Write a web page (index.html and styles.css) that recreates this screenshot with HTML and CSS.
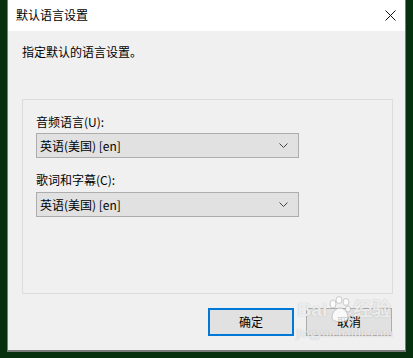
FILE: index.html
```html
<!DOCTYPE html>
<html lang="zh-CN">
<head>
<meta charset="utf-8">
<title>默认语言设置</title>
<link rel="stylesheet" href="styles.css">
</head>
<body>
<div class="dialog">
  <div class="titlebar">
    <span class="title">默认语言设置</span>
    <svg class="close" width="11" height="11" viewBox="0 0 11 11"><path d="M0.5 0.5 L10.5 10.5 M10.5 0.5 L0.5 10.5" stroke="#111" stroke-width="1" fill="none"/></svg>
  </div>
  <div class="body">
    <p class="intro">指定默认的语言设置。</p>
    <div class="group">
      <div class="label">音频语言(U):</div>
      <div class="combo"><span>英语(美国) [en]</span><svg class="chev" width="9" height="5" viewBox="0 0 9 5"><path d="M0.5 0.5 L4.5 4.5 L8.5 0.5" stroke="#444" stroke-width="1" fill="none"/></svg></div>
      <div class="label second">歌词和字幕(C):</div>
      <div class="combo"><span>英语(美国) [en]</span><svg class="chev" width="9" height="5" viewBox="0 0 9 5"><path d="M0.5 0.5 L4.5 4.5 L8.5 0.5" stroke="#444" stroke-width="1" fill="none"/></svg></div>
    </div>
    <div class="buttons">
      <div class="btn primary">确定</div>
      <div class="btn">取消</div>
    </div>
  </div>
  <div class="watermark">
    <span class="wm-logo">Bai<svg class="paw" width="24" height="28" viewBox="0 0 24 28"><g fill="rgba(255,255,255,0.8)" stroke="rgba(170,170,170,0.6)" stroke-width="1"><ellipse cx="5" cy="8" rx="3" ry="4"/><ellipse cx="11" cy="4" rx="3" ry="3.5"/><ellipse cx="18" cy="6" rx="3" ry="3.5"/><ellipse cx="20" cy="13" rx="2.5" ry="3"/><path d="M4 22 C4 15 9 12 12 12 C16 12 20 16 20 22 C20 27 4 27 4 22 Z"/></g></svg>经验</span>
    <span class="wm-url">jingyan.baidu.com</span>
  </div>
</div>
</body>
</html>
```
FILE: styles.css
```css
html, body {
  margin: 0;
  padding: 0;
}
body {
  width: 413px;
  height: 358px;
  background: #06300e;
  font-family: "Noto Sans CJK SC", "Noto Sans", sans-serif;
  font-size: 12px;
  color: #000;
  overflow: hidden;
}
.dialog {
  position: relative;
  margin-left: 7px;
  width: 397px;
  height: 350px;
  border-left: 1px solid #7b7b7b;
  border-right: 1px solid #7b7b7b;
  border-bottom: 2px solid #7b7b7b;
  background: #f0f0f0;
  display: flex;
  flex-direction: column;
}
.titlebar {
  height: 31px;
  background: #fff;
  display: flex;
  align-items: center;
  justify-content: space-between;
  padding: 0 9px 0 8px;
}
.title {
  line-height: 16px;
  margin-top: -1px;
}
.close {
  display: block;
  margin-top: -1px;
}
.body {
  flex: 1;
  display: flex;
  flex-direction: column;
  padding: 0 13px 0 14px;
}
.intro {
  margin: 13px 0 0 0;
  line-height: 16px;
}
.group {
  margin-top: 39px;
  border: 1px solid #dcdcdc;
  padding: 14px 0 0 13px;
  box-sizing: content-box;
  width: 356px;
  height: 179px;
}
.label {
  line-height: 16px;
  margin-bottom: 3px;
}
.label.second {
  margin-top: 14px;
  margin-bottom: 4px;
}
.combo {
  height: 23px;
  border: 1px solid #adadad;
  background: #e1e1e1;
  display: flex;
  align-items: center;
  justify-content: space-between;
  padding: 0 0 0 3px;
  box-sizing: content-box;
  width: 258px;
}
.combo span {
  line-height: 16px;
}
.chev {
  display: block;
  margin-right: 10px;
}
.buttons {
  margin-top: 14px;
  display: flex;
  justify-content: flex-end;
  gap: 12px;
}
.btn {
  width: 84px;
  height: 26px;
  border: 1px solid #adadad;
  background: #e1e1e1;
  display: flex;
  align-items: center;
  justify-content: center;
  line-height: 16px;
}
.btn.primary {
  width: 82px;
  height: 24px;
  border: 2px solid #0078d7;
}
.watermark {
  position: absolute;
  left: 288px;
  top: 296px;
  display: flex;
  flex-direction: column;
  align-items: center;
  color: rgba(255,255,255,0.8);
  text-shadow: 0 0 1px rgba(140,140,140,0.7);
  pointer-events: none;
}
.wm-logo {
  display: flex;
  align-items: center;
  font-family: "Liberation Sans", sans-serif;
  font-weight: bold;
  font-size: 19px;
  line-height: 28px;
}
.paw {
  display: block;
  margin: 0 1px;
}
.wm-url {
  font-family: "Liberation Serif", serif;
  font-size: 13px;
  line-height: 13px;
  margin-top: 2px;
}
```
